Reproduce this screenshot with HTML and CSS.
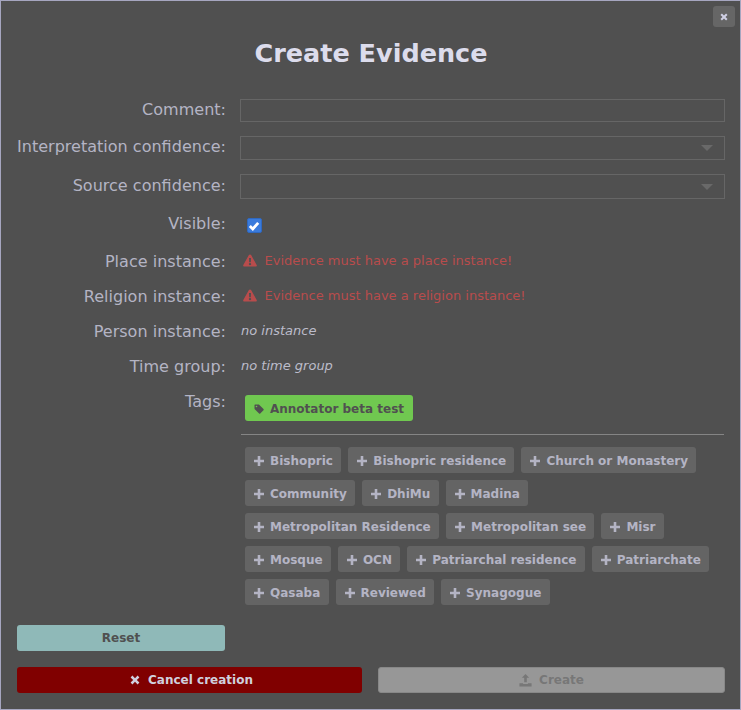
FILE: index.html
```html
<!DOCTYPE html>
<html>

<head>
	<meta charset="utf-8">
	<title>Create Evidence</title>
	<link rel="stylesheet" href="styles.css">
</head>

<body>
	<svg class="defs" width="0" height="0">
		<symbol id="icoPlus" viewBox="0 0 10 10">
			<path d="M3.7 0h2.600v3.700h3.700v2.600h-3.700v3.700h-2.600v-3.700h-3.700v-2.600h3.700z" />
		</symbol>
		<symbol id="icoTimes" viewBox="0 0 10 10">
			<path d="M2.400 .6l2.600 2.600 2.600-2.600 1.800 1.800-2.600 2.600 2.600 2.600-1.800 1.800-2.600-2.600-2.600 2.600-1.800-1.800 2.600-2.600-2.600-2.600z" />
		</symbol>
		<symbol id="icoWarn" viewBox="0 0 14 13">
			<path fill-rule="evenodd" d="M7 0.4c.5 0 .9.3 1.1.7l5.6 10c.4.7-.1 1.5-.9 1.5h-11.6c-.8 0-1.3-.8-.9-1.5l5.6-10c.2-.4.6-.7 1.100-.7zM6 4l.2 4.300h1.600l.2-4.300zM7 8.900a1.200 1.200 0 1 0 0 2.400 1.200 1.200 0 0 0 0-2.400z" />
		</symbol>
	</svg>

	<div id="div_main">
		<button type="button" class="close_btn"><svg class="ico ico_close"><use href="#icoTimes"></use></svg></button>
		<h1>Create Evidence</h1>

		<form class="form_rows">
			<div class="row">
				<label class="row_label">Comment:</label>
				<input type="text" class="txt_field">
			</div>
			<div class="row">
				<label class="row_label">Interpretation confidence:</label>
				<div class="select_field"><span class="caret"></span></div>
			</div>
			<div class="row row_tall">
				<label class="row_label">Source confidence:</label>
				<div class="select_field"><span class="caret"></span></div>
			</div>
			<div class="row row_check">
				<label class="row_label">Visible:</label>
				<span class="check_box">
					<svg viewBox="0 0 14 14" width="14" height="14">
						<path d="M2.800 7l3 3 5.400-6.200" fill="none" stroke="#fff" stroke-width="2.800" />
					</svg>
				</span>
			</div>
			<div class="row row_text">
				<label class="row_label">Place instance:</label>
				<span class="error_msg"><svg class="ico ico_warn"><use href="#icoWarn"></use></svg>Evidence must have a place instance!</span>
			</div>
			<div class="row row_text">
				<label class="row_label">Religion instance:</label>
				<span class="error_msg"><svg class="ico ico_warn"><use href="#icoWarn"></use></svg>Evidence must have a religion instance!</span>
			</div>
			<div class="row row_text">
				<label class="row_label">Person instance:</label>
				<span class="no_value">no instance</span>
			</div>
			<div class="row row_text">
				<label class="row_label">Time group:</label>
				<span class="no_value">no time group</span>
			</div>
			<div class="row row_tags">
				<label class="row_label">Tags:</label>
				<div class="tags_box">
					<div class="chips chips_active">
						<span class="chip chip_green">
							<svg class="ico" viewBox="0 0 12 12">
								<path fill-rule="evenodd" d="M0.600 1.300c0-.4.300-.7.700-.7h4.200c.3 0 .5.100.7.300l5.200 5.200c.4.400.4 1 0 1.400l-3.900 3.900c-.4.400-1 .4-1.400 0l-5.200-5.200c-.2-.2-.3-.4-.3-.7zM3 2a1 1 0 1 0 0 2 1 1 0 0 0 0-2z" />
							</svg>Annotator beta test
						</span>
					</div>
					<hr>
					<div class="chips">
						<span class="chip"><svg class="ico"><use href="#icoPlus"></use></svg>Bishopric</span>
						<span class="chip"><svg class="ico"><use href="#icoPlus"></use></svg>Bishopric residence</span>
						<span class="chip"><svg class="ico"><use href="#icoPlus"></use></svg>Church or Monastery</span>
						<span class="chip"><svg class="ico"><use href="#icoPlus"></use></svg>Community</span>
						<span class="chip"><svg class="ico"><use href="#icoPlus"></use></svg>DhiMu</span>
						<span class="chip"><svg class="ico"><use href="#icoPlus"></use></svg>Madina</span>
						<span class="chip"><svg class="ico"><use href="#icoPlus"></use></svg>Metropolitan Residence</span>
						<span class="chip"><svg class="ico"><use href="#icoPlus"></use></svg>Metropolitan see</span>
						<span class="chip"><svg class="ico"><use href="#icoPlus"></use></svg>Misr</span>
						<span class="chip"><svg class="ico"><use href="#icoPlus"></use></svg>Mosque</span>
						<span class="chip"><svg class="ico"><use href="#icoPlus"></use></svg>OCN</span>
						<span class="chip"><svg class="ico"><use href="#icoPlus"></use></svg>Patriarchal residence</span>
						<span class="chip"><svg class="ico"><use href="#icoPlus"></use></svg>Patriarchate</span>
						<span class="chip"><svg class="ico"><use href="#icoPlus"></use></svg>Qasaba</span>
						<span class="chip"><svg class="ico"><use href="#icoPlus"></use></svg>Reviewed</span>
						<span class="chip"><svg class="ico"><use href="#icoPlus"></use></svg>Synagogue</span>
					</div>
				</div>
			</div>
		</form>

		<button type="button" class="btn btn_reset">Reset</button>

		<div class="bottom_btns">
			<button type="button" class="btn btn_cancel"><svg class="ico"><use href="#icoTimes"></use></svg>Cancel creation</button>
			<button type="button" class="btn btn_create">
				<svg class="ico" viewBox="0 0 12 12">
					<path d="M6 0l3.400 3.400h-2.200v4.200h-2.400v-4.200h-2.200zM0.400 8.600h3.400v.6h4.400v-.6h3.400v3h-11.200z" />
				</svg>Create
			</button>
		</div>
	</div>
</body>

</html>
```

FILE: styles.css
```css
* {
	box-sizing: border-box;
}

html,
body {
	margin: 0;
	height: 100%;
	background-color: #505050;
}

.defs {
	position: absolute;
}

.ico {
	width: 10px;
	height: 10px;
	fill: currentColor;
	flex: none;
}

#div_main {
	position: relative;
	width: 741px;
	height: 710px;
	padding: 0 15px 0 16px;
	border: 1px solid #a6a6c0;
	background-color: #505050;
	font-family: "DejaVu Sans", sans-serif;
	color: #b4b4c4;
}

h1 {
	margin: 0;
	padding-top: 36px;
	height: 98px;
	font-size: 25.5px;
	line-height: 32px;
	font-weight: bold;
	text-align: center;
	color: #dcdcec;
}

.close_btn {
	position: absolute;
	top: 5px;
	right: 5px;
	display: flex;
	align-items: center;
	justify-content: center;
	width: 22px;
	height: 21px;
	padding: 0;
	border: 0;
	border-radius: 3px;
	background-color: #666;
	color: #cfcfe4;
}

.ico_close {
	width: 8px;
	height: 8px;
}

.form_rows {
	display: flex;
	flex-direction: column;
	gap: 14px;
}

.row {
	display: flex;
	align-items: flex-start;
	gap: 14px;
}

.row_label {
	flex: none;
	width: 211px;
	margin-left: -2px;
	font-size: 16.05px;
	line-height: 21px;
	text-align: right;
	white-space: nowrap;
}

.txt_field {
	flex: 1;
	height: 23px;
	border: 1px solid #666;
	background-color: #505050;
}

.select_field {
	flex: 1;
	display: flex;
	align-items: center;
	justify-content: flex-end;
	height: 24px;
	padding-right: 11px;
	border: 1px solid #666;
}

/* source row sits 1px lower than the others */
.row_tall .select_field {
	height: 25px;
}

.row_tall .row_label {
	padding-top: 1px;
}

.caret {
	width: 0;
	height: 0;
	border-left: 6px solid transparent;
	border-right: 6px solid transparent;
	border-top: 6px solid #696969;
}

.row_check {
	height: 24px;
}

.check_box {
	display: block;
	width: 15px;
	height: 15px;
	margin: 5px 0 0 7px;
	border: 1px solid #2f68c0;
	border-radius: 2px;
	background-color: #3a7bdc;
	line-height: 0;
	overflow: hidden;
}

.check_box svg {
	margin: 0 0 0 -1px;
}

.row_text {
	height: 21px;
}

.error_msg {
	display: flex;
	align-items: center;
	gap: 7.5px;
	margin-left: 3px;
	font-size: 13px;
	line-height: 19px;
	color: #b84c4c;
}

.ico_warn {
	width: 14px;
	height: 13px;
}

.no_value {
	margin-left: 1px;
	font-size: 13px;
	font-style: italic;
	line-height: 19px;
	color: #bcbcca;
}

.tags_box {
	flex: 1;
	padding: 4px 1px 0;
}

.chips {
	display: flex;
	flex-wrap: wrap;
	gap: 7px;
	padding-left: 4px;
}

.chip {
	display: inline-flex;
	align-items: center;
	gap: 6px;
	height: 26px;
	padding: 1px 8.3px 0 9px;
	border-radius: 3px;
	background-color: #646464;
	font-size: 12px;
	font-weight: bold;
	white-space: nowrap;
}

.chip_green {
	padding-right: 9px;
	background-color: #70c850;
	color: #505050;
}

hr {
	display: block;
	height: 0;
	margin: 13px 0 12px;
	border: 0;
	border-top: 1px solid #858585;
}

.btn {
	display: flex;
	align-items: center;
	justify-content: center;
	gap: 8px;
	height: 26px;
	padding: 0;
	border: 0;
	border-radius: 3px;
	font-family: "DejaVu Sans", sans-serif;
	font-size: 12px;
	font-weight: bold;
}

.btn_reset {
	width: 208px;
	margin-top: 20px;
	background-color: #8fb9b8;
	color: #505050;
}

.bottom_btns {
	display: flex;
	gap: 16px;
	margin-top: 16px;
}

.btn_cancel {
	width: 345px;
	padding-left: 4px;
	background-color: #800000;
	color: #d0d0de;
}

.btn_create {
	flex: 1;
	border: 1px solid #888;
	background-color: #979797;
	color: #777;
	gap: 7px;
}

.btn_create .ico {
	width: 13px;
	height: 13px;
}
```
